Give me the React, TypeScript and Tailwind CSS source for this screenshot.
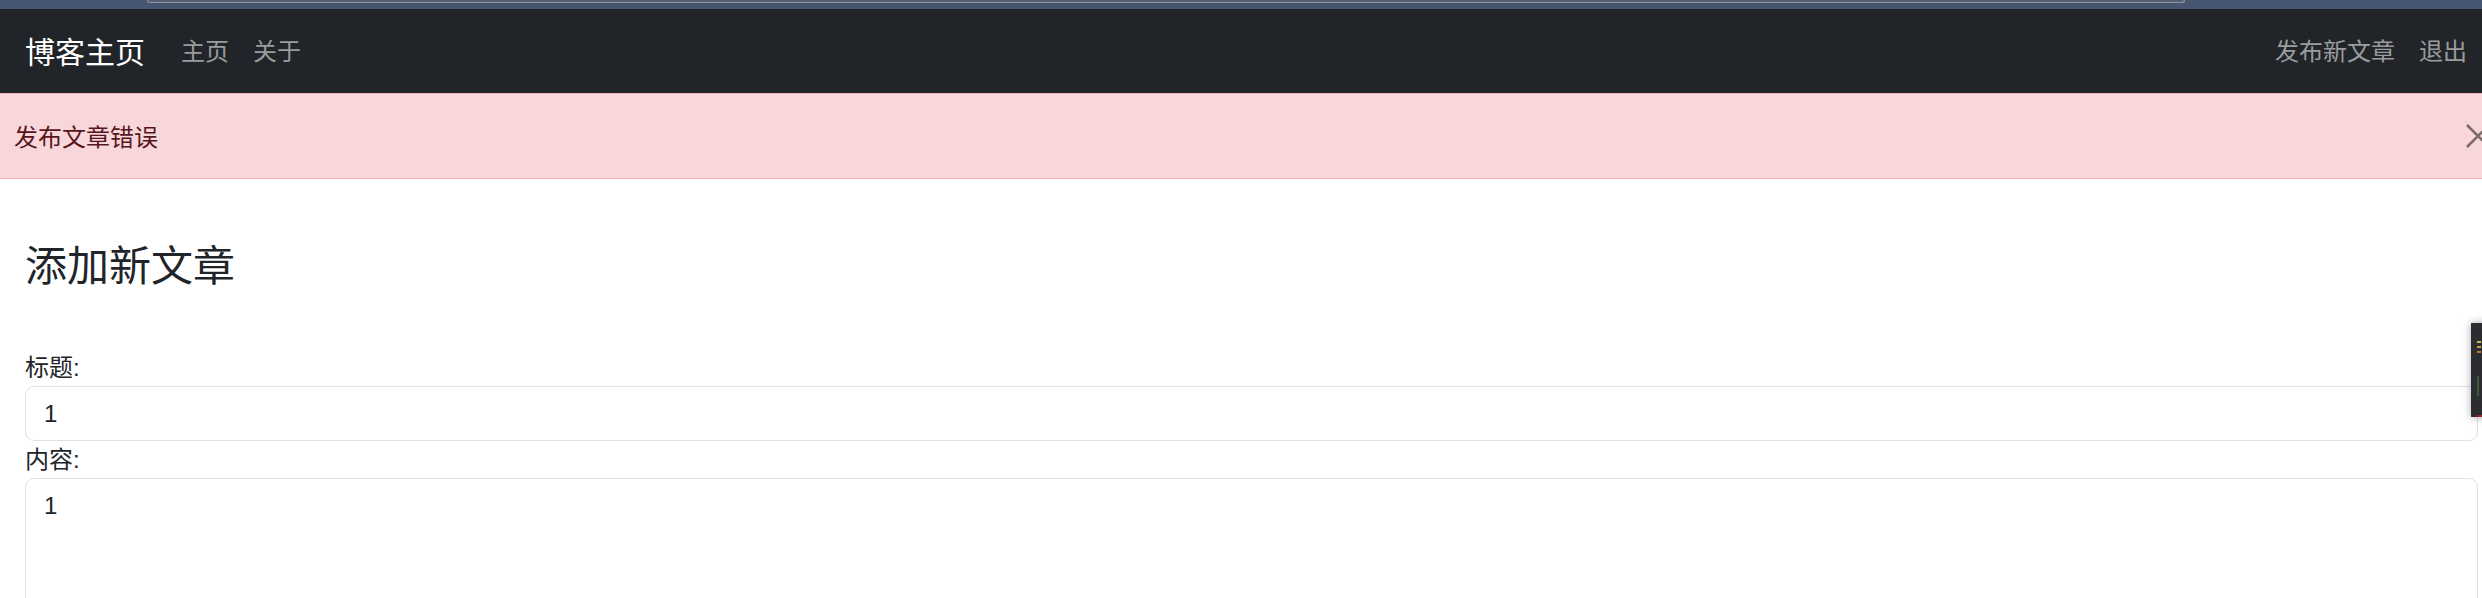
export default function App() {
  return (
    <div className="relative w-[2482px] h-[598px] overflow-hidden bg-white font-['Liberation_Sans','Noto_Sans_CJK_SC',sans-serif] text-[#212529]">
      {/* browser chrome strip */}
      <div className="h-[9px] bg-[#475670] pl-[147px]">
        <div className="w-[2038px] h-[3px] bg-[#566073] border-b border-x border-[#8e96a3] rounded-b-[8px]" />
      </div>

      {/* navbar */}
      <nav className="h-[84px] bg-[#212529] flex items-center pt-[2px] pl-[25px] pr-[3px]">
        <a className="text-[30px] leading-[45px] text-white mr-[24px]">博客主页</a>
        <a className="px-[12px] text-[24px] leading-[36px] text-[#9b9c9e]">主页</a>
        <a className="px-[12px] text-[24px] leading-[36px] text-[#9b9c9e]">关于</a>
        <div className="ml-auto flex">
          <a className="px-[12px] text-[24px] leading-[36px] text-[#9b9c9e]">发布新文章</a>
          <a className="px-[12px] text-[24px] leading-[36px] text-[#9b9c9e]">退出</a>
        </div>
      </nav>

      {/* alert */}
      <div className="h-[86px] bg-[#f8d7da] border-y border-[#f1aeb5] flex items-center justify-between pl-[14px] text-[24px] leading-[36px] text-[#58151c]">
        <span className="pt-[4px]">发布文章错误</span>
        <svg width="24" height="24" viewBox="0 0 24 24" className="mr-[-8px] shrink-0" fill="none" stroke="#7a6a6c" strokeWidth="2.6">
          <path d="M1 1 L23 23 M23 1 L1 23" />
        </svg>
      </div>

      {/* form */}
      <main className="pl-[25px] pr-[4px]">
        <h3 className="mt-[63px] text-[42px] leading-[50px] font-normal">添加新文章</h3>
        <form className="mt-[58px]">
          <label className="block text-[24px] leading-[36px]">标题:</label>
          <input
            readOnly
            value="1"
            className="block w-full h-[55px] px-[18px] text-[24px] leading-[36px] border border-[#dee2e6] rounded-[9px] outline-none"
          />
          <label className="block mt-[1px] text-[24px] leading-[36px]">内容:</label>
          <textarea
            readOnly
            value="1"
            className="block w-full h-[240px] px-[18px] py-[9px] text-[24px] leading-[36px] border border-[#dee2e6] rounded-[9px] outline-none resize-none"
          />
        </form>
      </main>

      {/* peeking window at right edge */}
      <div className="absolute left-[2471px] top-[323px] w-[24px] h-[94px] bg-[#2b2d30] shadow-[0_0_8px_rgba(0,0,0,0.35)] flex flex-col gap-[3px] pt-[18px] pl-[6px]">
        <div className="w-[4px] h-[2px] bg-[#c9b94a]" />
        <div className="w-[4px] h-[2px] bg-[#b8a43c]" />
        <div className="w-[4px] h-[2px] bg-[#c0703a]" />
        <div className="w-[2px] h-[20px] mt-[20px] bg-[#3d5a3d]" />
        <div className="w-[6px] h-[2px] mt-[16px] bg-[#9a2a2a]" />
      </div>
    </div>
  );
}
